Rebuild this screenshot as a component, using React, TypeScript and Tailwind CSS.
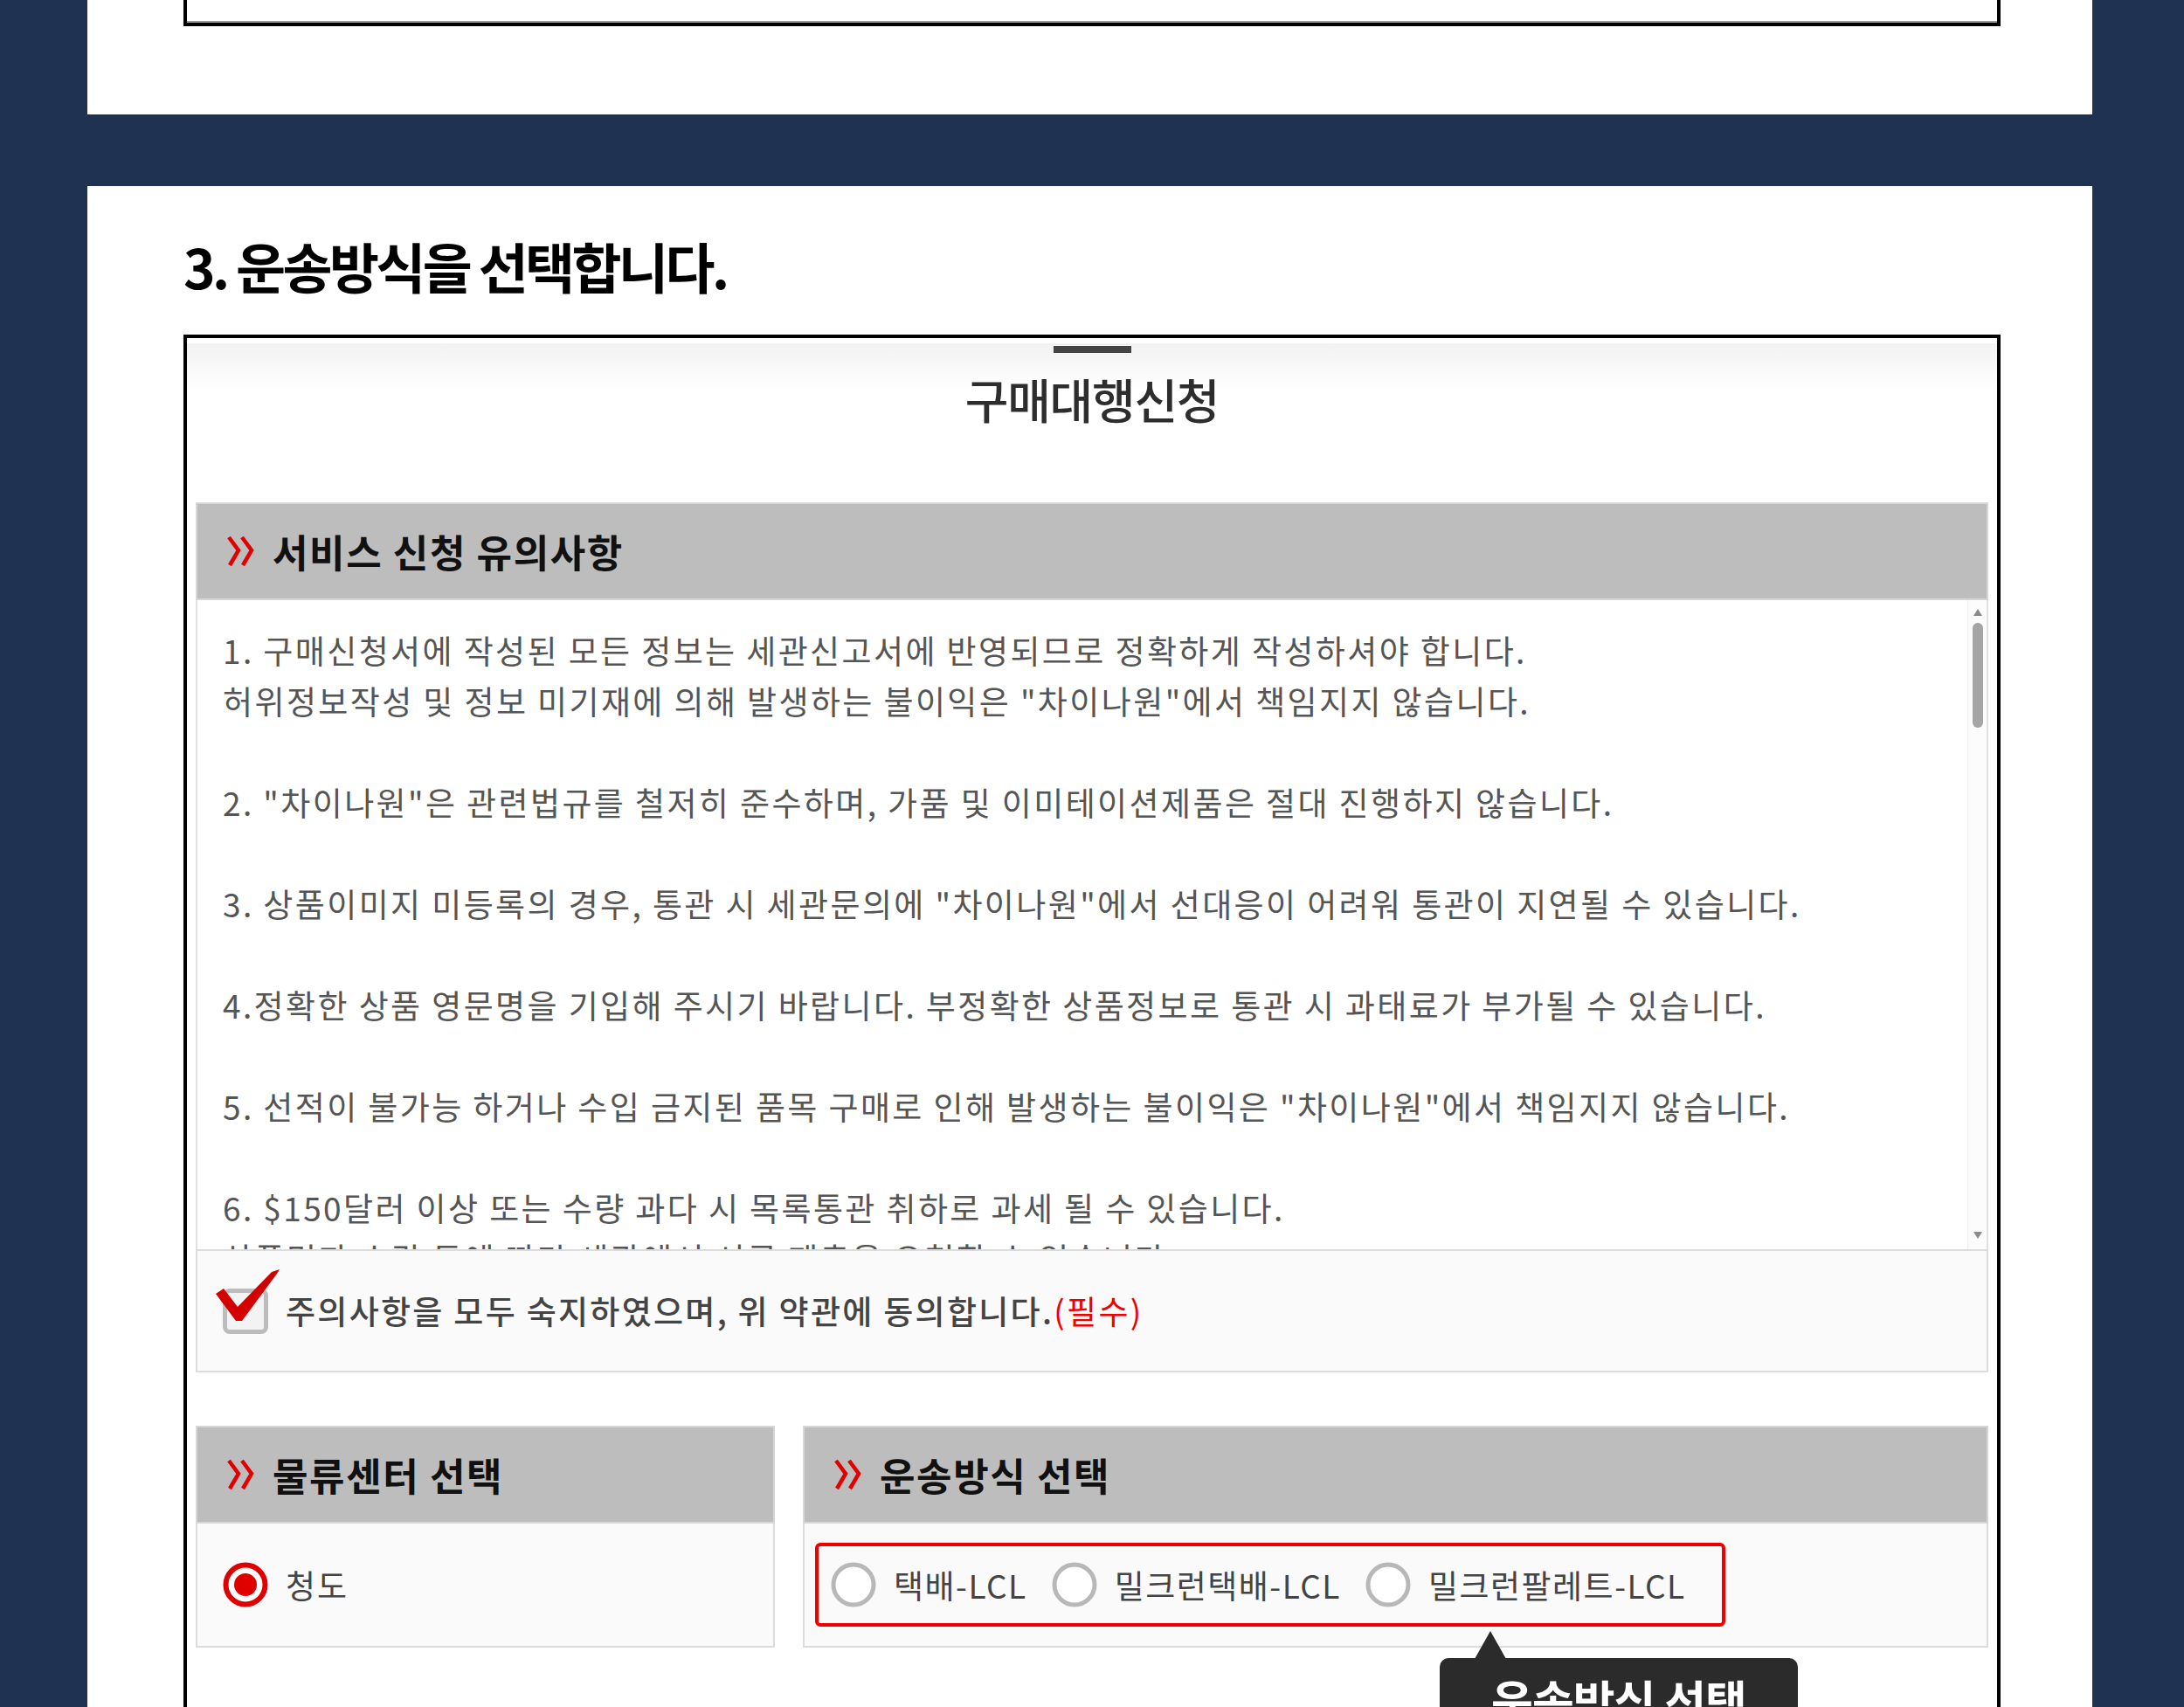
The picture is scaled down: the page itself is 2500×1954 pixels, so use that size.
import React from "react";

const notes: string[][] = [
  [
    "1. 구매신청서에 작성된 모든 정보는 세관신고서에 반영되므로 정확하게 작성하셔야 합니다.",
    "허위정보작성 및 정보 미기재에 의해 발생하는 불이익은 \"차이나원\"에서 책임지지 않습니다.",
  ],
  ["2. \"차이나원\"은 관련법규를 철저히 준수하며, 가품 및 이미테이션제품은 절대 진행하지 않습니다."],
  ["3. 상품이미지 미등록의 경우, 통관 시 세관문의에 \"차이나원\"에서 선대응이 어려워 통관이 지연될 수 있습니다."],
  ["4.정확한 상품 영문명을 기입해 주시기 바랍니다. 부정확한 상품정보로 통관 시 과태료가 부가될 수 있습니다."],
  ["5. 선적이 불가능 하거나 수입 금지된 품목 구매로 인해 발생하는 불이익은 \"차이나원\"에서 책임지지 않습니다."],
  [
    "6. $150달러 이상 또는 수량 과다 시 목록통관 취하로 과세 될 수 있습니다.",
    "상품명과 수량 등에 따라 세관에서 서류 제출을 요청할 수 있습니다.",
  ],
];

function Chevrons() {
  return (
    <svg width="38" height="36" viewBox="0 0 38 36" className="shrink-0">
      <path d="M4 2 L15 17 L5 34" fill="none" stroke="#e00000" strokeWidth="4.5" strokeLinejoin="miter" />
      <path d="M19 2 L30 17 L20 34" fill="none" stroke="#e00000" strokeWidth="4.5" strokeLinejoin="miter" />
    </svg>
  );
}

function SectionHead({ title }: { title: string }) {
  return (
    <div className="flex h-[112px] items-center gap-[16px] border-2 border-[#d6d6d6] bg-[#bdbdbd] pl-[32px]">
      <Chevrons />
      <span className="text-[44px] font-bold leading-none tracking-[1.6px] text-[#111]">{title}</span>
    </div>
  );
}

function Radio({ checked }: { checked?: boolean }) {
  if (checked) {
    return (
      <svg width="52" height="52" viewBox="0 0 52 52" className="shrink-0">
        <circle cx="26" cy="26" r="22.5" fill="white" stroke="#e00000" strokeWidth="6" />
        <circle cx="26" cy="26" r="13" fill="#e00000" />
      </svg>
    );
  }
  return (
    <svg width="52" height="52" viewBox="0 0 52 52" className="shrink-0">
      <circle cx="26" cy="26" r="23" fill="white" stroke="#b8b8b8" strokeWidth="5" />
    </svg>
  );
}

function CheckBox() {
  return (
    <div className="relative h-[52px] w-[52px] shrink-0 rounded-[8px] border-[5px] border-[#bcbcbc] bg-[#f3f3f3]">
      <svg width="74" height="60" viewBox="0 0 74 60" className="absolute left-[-13px] top-[-27px]">
        <path
          d="M0 28 L9 22 L25 43 L64 3 L73 0 L70 5 L30 59 L23 59 Z"
          fill="#d40000"
        />
      </svg>
    </div>
  );
}

export default function App() {
  return (
    <div className="min-h-[1954px] overflow-hidden bg-[#1f3252] font-['Noto_Sans_CJK_KR','Noto_Sans',sans-serif]">
      <div className="ml-[100px] w-[2295px]">
        {/* previous step panel (cut off) */}
        <div className="h-[131px] bg-white pl-[110px]">
          <div className="h-[30px] w-[2080px] border-x-4 border-b-4 border-black">
            <div className="h-full border-b-2 border-[#9a9a9a]" />
          </div>
        </div>

        <div className="h-[82px]" />

        <div className="bg-white pl-[110px] pt-[60px]">
          <h2 className="text-[62px] font-bold leading-none tracking-[-3.6px] text-black">
            3. 운송방식을 선택합니다.
          </h2>

          <div className="mt-[48px] w-[2080px] border-4 border-black bg-white pt-[6px]">
            <div className="flex flex-col items-center bg-linear-to-b from-[#f2f2f2] to-white to-30% pt-[3px]">
              <div className="h-[8px] w-[89px] bg-[#444]" />
              <div className="mt-[26px] mb-[91px] text-[54px] font-medium leading-none tracking-[-1.3px] text-[#2d2d2d]">
                구매대행신청
              </div>
            </div>

            <div className="px-[10px]">
              <SectionHead title="서비스 신청 유의사항" />

              <div className="flex h-[743px] border-x-2 border-[#e1e1e1] bg-white">
                <div className="flex-1 overflow-hidden whitespace-nowrap pl-[29px] pt-[28px] text-[37px] leading-[58px] tracking-[2.4px] text-[#555]">
                  {notes.map((p, i) => (
                    <div key={i} className="mb-[58px]">
                      {p.map((l, j) => (
                        <div key={j}>{l}</div>
                      ))}
                    </div>
                  ))}
                </div>
                <div className="flex w-[22px] flex-col items-center border-l border-[#efefef] bg-[#fcfcfc] pt-[10px] pb-[12px]">
                  <svg width="10" height="8" viewBox="0 0 10 8">
                    <path d="M5 0 L10 8 L0 8 Z" fill="#8a8a8a" />
                  </svg>
                  <div className="mt-[8px] h-[120px] w-[12px] rounded-full bg-[#a5a5a5]" />
                  <div className="flex-1" />
                  <svg width="10" height="8" viewBox="0 0 10 8">
                    <path d="M0 0 L10 0 L5 8 Z" fill="#8a8a8a" />
                  </svg>
                </div>
              </div>

              <div className="flex h-[141px] items-center gap-[20px] border-2 border-[#dcdcdc] bg-[#fafafa] pl-[29px]">
                <CheckBox />
                <span className="text-[37px] font-medium leading-none tracking-[2.3px] text-[#444]">
                  주의사항을 모두 숙지하였으며, 위 약관에 동의합니다.
                  <span className="font-normal text-[#f00000]">(필수)</span>
                </span>
              </div>

              <div className="mt-[61px] flex gap-[32px]">
                <div className="w-[663px] shrink-0">
                  <SectionHead title="물류센터 선택" />
                  <div className="flex h-[142px] items-center gap-[20px] border-2 border-t-0 border-[#dcdcdc] bg-[#fafafa] pl-[29px]">
                    <Radio checked />
                    <span className="text-[37px] leading-none tracking-[2px] text-[#444]">청도</span>
                  </div>
                </div>

                <div className="relative flex-1">
                  <SectionHead title="운송방식 선택" />
                  <div className="flex h-[142px] items-center border-2 border-t-0 border-[#dcdcdc] bg-[#fafafa] pl-[12px]">
                    <div className="flex h-[96px] w-[1042px] items-center gap-[28px] rounded-[6px] border-4 border-[#f20000] pl-[14px]">
                      {["택배-LCL", "밀크런택배-LCL", "밀크런팔레트-LCL"].map((t) => (
                        <div key={t} className="flex items-center gap-[20px]">
                          <Radio />
                          <span className="text-[37px] leading-none tracking-[1.5px] text-[#444]">{t}</span>
                        </div>
                      ))}
                    </div>
                  </div>

                  {/* tooltip */}
                  <div className="absolute left-[729px] top-[266px] h-[110px] w-[410px] rounded-[10px] bg-[#2b2b2b] pt-[22px] text-center">
                    <svg width="40" height="32" viewBox="0 0 40 32" className="absolute left-[38px] top-[-31px]">
                      <path d="M20 0 L38 32 L2 32 Z" fill="#2b2b2b" />
                    </svg>
                    <span className="text-[52px] font-bold leading-none tracking-[-1px] text-white">운송방식 선택</span>
                  </div>
                </div>
              </div>

              <div className="h-[200px]" />
            </div>
          </div>
        </div>
      </div>
    </div>
  );
}
